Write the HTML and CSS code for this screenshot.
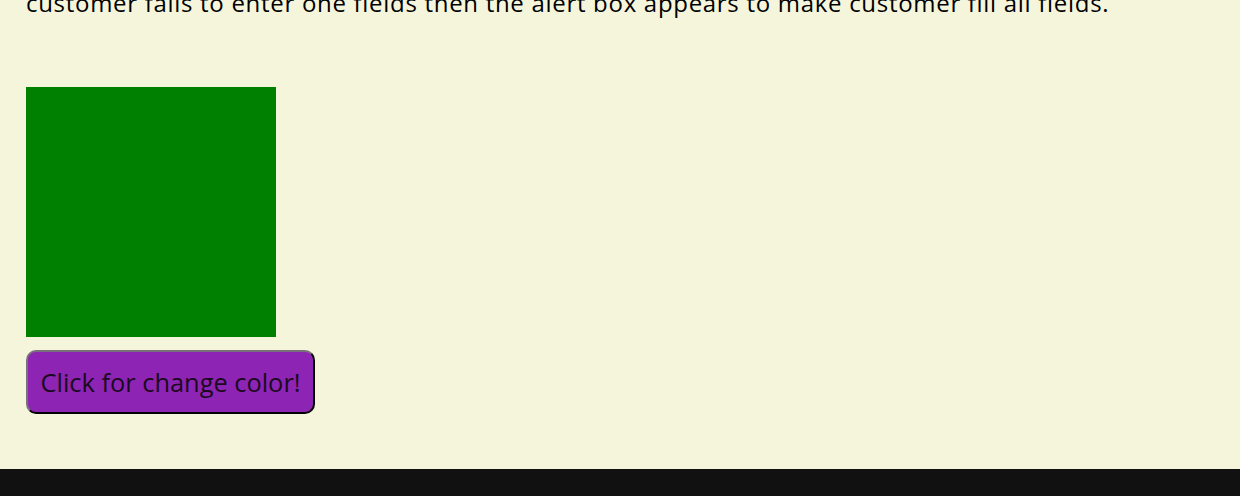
FILE: index.html
```html
<!DOCTYPE html>
<html lang="en">
<head>
<meta charset="utf-8">
<title>Change color</title>
<link rel="stylesheet" href="styles.css">
</head>
<body>
<main class="content">
  <p class="intro">customer fails to enter one fields then the alert box appears to make customer fill all fields.</p>
  <div class="box"></div>
  <button class="change-btn" type="button">Click for change color!</button>
</main>
<footer class="footer"></footer>
</body>
</html>
```

FILE: styles.css
```css
html, body {
  margin: 0;
  padding: 0;
}
body {
  background: #f5f5dc;
  font-family: "Comic Sans MS", "Open Sans", sans-serif;
  color: #000;
}
.content {
  padding: 0 26px;
  margin-top: -14px;
  display: flex;
  flex-direction: column;
  align-items: flex-start;
}
.intro {
  margin: 0 0 68px;
  font-size: 24px;
  line-height: 33px;
  letter-spacing: 0.7px;
  white-space: nowrap;
}
.box {
  width: 250px;
  height: 250px;
  background: #008000;
}
.change-btn {
  margin-top: 13px;
  width: 289px;
  height: 64px;
  padding: 0 8px;
  background: #8e24b4;
  border: 2px outset #6a5a70;
  border-color: #7a707c #2a1a2e #2a1a2e #7a707c;
  border-radius: 10px;
  font-family: "Comic Sans MS", "Open Sans", sans-serif;
  font-size: 25.4px;
  color: #1a0a20;
  cursor: pointer;
}
.footer {
  margin-top: 55px;
  height: 27px;
  background: #111111;
}
```
